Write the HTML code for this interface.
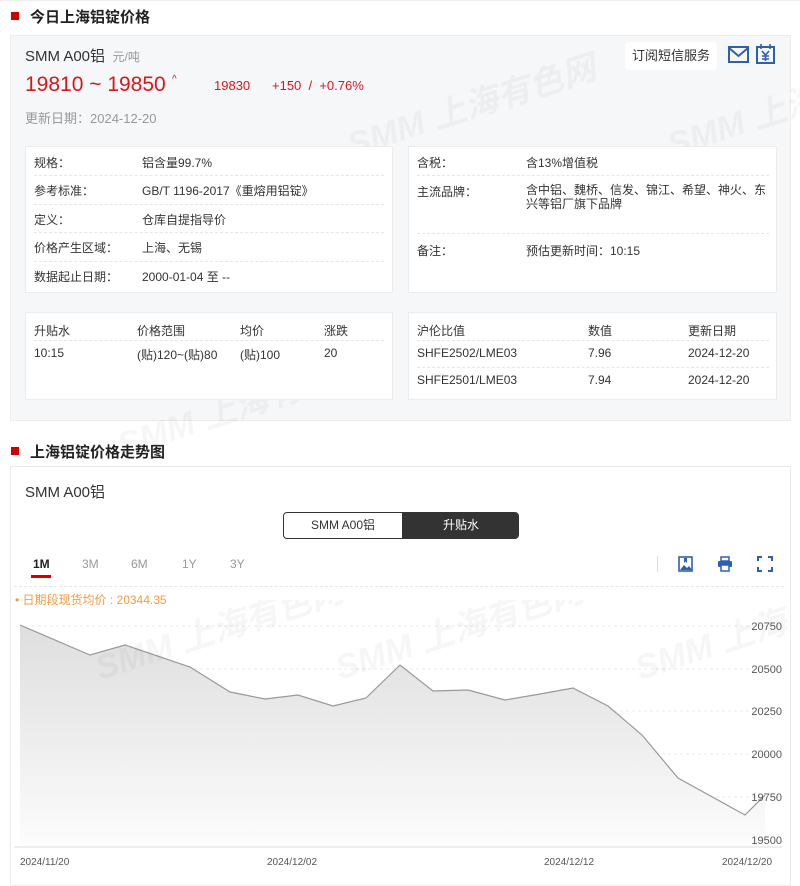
<!DOCTYPE html>
<html><head><meta charset="utf-8"><style>
*{margin:0;padding:0;box-sizing:border-box}
body{width:800px;height:872px;background:#fff;font-family:"Liberation Sans","Noto Sans CJK SC",sans-serif;color:#333;position:relative;overflow:hidden;font-size:12px}
.a{position:absolute;white-space:nowrap}
.tt{font-size:15px;font-weight:bold;color:#222}
.sq{position:absolute;width:8px;height:8px;background:#d40000}
.box{position:absolute;background:#fff;border:1px solid #ececec}
.dl{position:absolute;border-top:1px dashed #e6e6e6;height:0}
.g{color:#999}
.wm{position:absolute;white-space:nowrap;font-size:34px;font-weight:bold;font-style:italic;color:rgba(0,0,0,0.035);transform:rotate(-18deg);transform-origin:left top}
</style></head><body>
<div style="position:absolute;left:0;top:0;width:800px;height:1px;background:#eee"></div>
<div class="sq" style="left:11px;top:12px"></div>
<div class="a tt" style="left:30px;top:6px">今日上海铝锭价格</div>
<div style="position:absolute;left:10px;top:35px;width:781px;height:386px;background:#f6f7f9;border:1px solid #ebebeb"></div>
<div class="wm" style="left:340px;top:120px">SMM 上海有色网</div>
<div class="wm" style="left:660px;top:120px">SMM 上海</div>
<div class="wm" style="left:110px;top:420px">SMM 上海有色网</div>
<div class="a" style="left:25px;top:45px;font-size:15px;color:#333">SMM A00铝 <span style="font-size:12px;color:#999">&nbsp;元/吨</span></div>
<div class="a" style="left:25px;top:73px;font-size:21px;color:#d8161b">19810 ~ 19850</div>
<div class="a" style="left:172px;top:74px;font-size:10px;color:#d8161b">&#94;</div>
<div class="a" style="left:214px;top:78px;font-size:13px;color:#d8161b">19830</div>
<div class="a" style="left:272px;top:78px;font-size:13px;color:#d8161b">+150 &nbsp;/ &nbsp;+0.76%</div>
<div class="a g" style="left:25px;top:108px;font-size:13px">更新日期：2024-12-20</div>
<div class="a" style="left:625px;top:42px;width:92px;height:28px;background:#fff;border-radius:4px;font-size:13px;line-height:28px;text-align:center">订阅短信服务</div>
<svg class="a" style="left:728px;top:46px" width="22" height="18" viewBox="0 0 22 18"><rect x="1" y="1" width="19" height="15" fill="none" stroke="#2f5fb3" stroke-width="2"/><path d="M1 2l9.5 8L20 2" fill="none" stroke="#2f5fb3" stroke-width="2"/></svg>
<svg class="a" style="left:755px;top:43px" width="22" height="22" viewBox="0 0 22 22"><rect x="2" y="4" width="17" height="16" fill="none" stroke="#2f5fb3" stroke-width="2"/><path d="M6 1v5M15 1v5M7 8l3.5 4 3.5-4M10.5 12v6M7 13h7M7 16h7" fill="none" stroke="#2f5fb3" stroke-width="1.6"/></svg>

<div class="box" style="left:25px;top:146px;width:368px;height:147px"></div>
<div class="a" style="left:34px;top:154px">规格：</div><div class="a" style="left:142px;top:154px">铝含量99.7%</div>
<div class="dl" style="left:34px;top:175px;width:350px"></div>
<div class="a" style="left:34px;top:182px">参考标准：</div><div class="a" style="left:142px;top:182px">GB/T 1196-2017《重熔用铝锭》</div>
<div class="dl" style="left:34px;top:204px;width:350px"></div>
<div class="a" style="left:34px;top:211px">定义：</div><div class="a" style="left:142px;top:211px">仓库自提指导价</div>
<div class="dl" style="left:34px;top:232px;width:350px"></div>
<div class="a" style="left:34px;top:239px">价格产生区域：</div><div class="a" style="left:142px;top:239px">上海、无锡</div>
<div class="dl" style="left:34px;top:261px;width:350px"></div>
<div class="a" style="left:34px;top:268px">数据起止日期：</div><div class="a" style="left:142px;top:268px">2000-01-04 至 --</div>

<div class="box" style="left:408px;top:146px;width:369px;height:147px"></div>
<div class="a" style="left:417px;top:154px">含税：</div><div class="a" style="left:526px;top:154px">含13%增值税</div>
<div class="dl" style="left:417px;top:175px;width:352px"></div>
<div class="a" style="left:417px;top:183px">主流品牌：</div><div class="a" style="left:526px;top:183px;line-height:14px">含中铝、魏桥、信发、锦江、希望、神火、东<br>兴等铝厂旗下品牌</div>
<div class="dl" style="left:417px;top:233px;width:352px"></div>
<div class="a" style="left:417px;top:242px">备注：</div><div class="a" style="left:526px;top:242px">预估更新时间：10:15</div>

<div class="box" style="left:25px;top:312px;width:368px;height:88px"></div>
<div class="a" style="left:34px;top:322px">升贴水</div><div class="a" style="left:137px;top:322px">价格范围</div><div class="a" style="left:240px;top:322px">均价</div><div class="a" style="left:324px;top:322px">涨跌</div>
<div class="dl" style="left:34px;top:340px;width:350px"></div>
<div class="a" style="left:34px;top:346px">10:15</div><div class="a" style="left:137px;top:346px">(贴)120~(贴)80</div><div class="a" style="left:240px;top:346px">(贴)100</div><div class="a" style="left:324px;top:346px">20</div>

<div class="box" style="left:408px;top:312px;width:369px;height:88px"></div>
<div class="a" style="left:417px;top:322px">沪伦比值</div><div class="a" style="left:588px;top:322px">数值</div><div class="a" style="left:688px;top:322px">更新日期</div>
<div class="dl" style="left:417px;top:340px;width:352px"></div>
<div class="a" style="left:417px;top:346px">SHFE2502/LME03</div><div class="a" style="left:588px;top:346px">7.96</div><div class="a" style="left:688px;top:346px">2024-12-20</div>
<div class="dl" style="left:417px;top:367px;width:352px"></div>
<div class="a" style="left:417px;top:373px">SHFE2501/LME03</div><div class="a" style="left:588px;top:373px">7.94</div><div class="a" style="left:688px;top:373px">2024-12-20</div>

<div class="sq" style="left:11px;top:447px"></div>
<div class="a tt" style="left:30px;top:441px">上海铝锭价格走势图</div>
<div style="position:absolute;left:10px;top:466px;width:781px;height:420px;border:1px solid #ebebeb"></div>
<div class="a" style="left:25px;top:481px;font-size:15px">SMM A00铝</div>
<div class="a" style="left:283px;top:512px;width:236px;height:27px;border:1px solid #333;border-radius:4px;overflow:hidden">
<div style="position:absolute;left:0;top:0;width:118px;height:25px;line-height:25px;text-align:center;font-size:12px">SMM A00铝</div>
<div style="position:absolute;left:118px;top:0;width:118px;height:25px;line-height:25px;text-align:center;background:#333;color:#fff;font-size:12px">升贴水</div></div>
<div class="a" style="left:33px;top:557px;font-weight:bold;color:#222">1M</div>
<div style="position:absolute;left:31px;top:575px;width:20px;height:3px;background:#d40000"></div>
<div class="a g" style="left:82px;top:557px">3M</div><div class="a g" style="left:131px;top:557px">6M</div><div class="a g" style="left:182px;top:557px">1Y</div><div class="a g" style="left:230px;top:557px">3Y</div>
<div style="position:absolute;left:657px;top:556px;width:1px;height:16px;background:#ddd"></div>
<svg class="a" style="left:678px;top:556px" width="16" height="16" viewBox="0 0 16 16"><rect x="1" y="1" width="13" height="14" fill="none" stroke="#2f5fb3" stroke-width="1.6"/><path d="M2 14l4-5 3 3 2-2 3 4z M6 2v5l1.5-1.5L9 7V2z" fill="#2f5fb3"/></svg>
<svg class="a" style="left:717px;top:556px" width="16" height="16" viewBox="0 0 16 16"><rect x="4" y="1" width="8" height="4" fill="none" stroke="#2f5fb3" stroke-width="1.5"/><rect x="1" y="5" width="14" height="6" rx="1" fill="#2f5fb3"/><rect x="4" y="9" width="8" height="6" fill="#fff" stroke="#2f5fb3" stroke-width="1.5"/></svg>
<svg class="a" style="left:757px;top:556px" width="16" height="16" viewBox="0 0 16 16"><path d="M1 5V1h4M11 1h4v4M15 11v4h-4M5 15H1v-4" fill="none" stroke="#2f5fb3" stroke-width="2"/></svg>
<div class="dl" style="left:14px;top:586px;width:770px"></div>
<div class="a" style="left:15px;top:591px;color:#f79a3e">• 日期段现货均价 : 20344.35</div>
<svg class="a" style="left:0;top:600px" width="800" height="272" viewBox="0 600 800 272">
<defs><linearGradient id="gr" x1="0" y1="0" x2="0" y2="1"><stop offset="0" stop-color="#dedede"/><stop offset="1" stop-color="#fcfcfc"/></linearGradient></defs>
<g stroke="#e8e8e8" stroke-dasharray="3,3"><line x1="20" x2="782" y1="626" y2="626"/><line x1="20" x2="782" y1="669" y2="669"/><line x1="20" x2="782" y1="711" y2="711"/><line x1="20" x2="782" y1="754" y2="754"/><line x1="20" x2="782" y1="797" y2="797"/></g>
<path d="M20 625L90 655L125 645L190 667L230 692L265 699L298 695L333 706L366 698L400 665L433 691L468 690L505 700L540 694L573 688L608 706L642 735L678 778L745 815L765 795V846H20Z" fill="url(#gr)"/>
<path d="M20 625L90 655L125 645L190 667L230 692L265 699L298 695L333 706L366 698L400 665L433 691L468 690L505 700L540 694L573 688L608 706L642 735L678 778L745 815L765 795" fill="none" stroke="#999" stroke-width="1.2"/>
<g font-size="34" font-weight="bold" font-style="italic" fill="rgba(0,0,0,0.035)" font-family="Liberation Sans,Noto Sans CJK SC,sans-serif"><text x="100" y="680" transform="rotate(-18 100 680)">SMM 上海有色网</text><text x="340" y="680" transform="rotate(-18 340 680)">SMM 上海有色网</text><text x="640" y="680" transform="rotate(-18 640 680)">SMM 上海</text></g>
<line x1="14" x2="782" y1="847" y2="847" stroke="#eee" stroke-width="2"/>
<g font-size="11" fill="#555" font-family="Liberation Sans,sans-serif" text-anchor="end"><text x="782" y="630">20750</text><text x="782" y="673">20500</text><text x="782" y="715">20250</text><text x="782" y="758">20000</text><text x="782" y="801">19750</text><text x="782" y="844">19500</text></g>
<g font-size="10" fill="#555" font-family="Liberation Sans,sans-serif"><text x="20" y="865">2024/11/20</text><text x="267" y="865">2024/12/02</text><text x="544" y="865">2024/12/12</text><text x="722" y="865">2024/12/20</text></g>
</svg>
</body></html>
